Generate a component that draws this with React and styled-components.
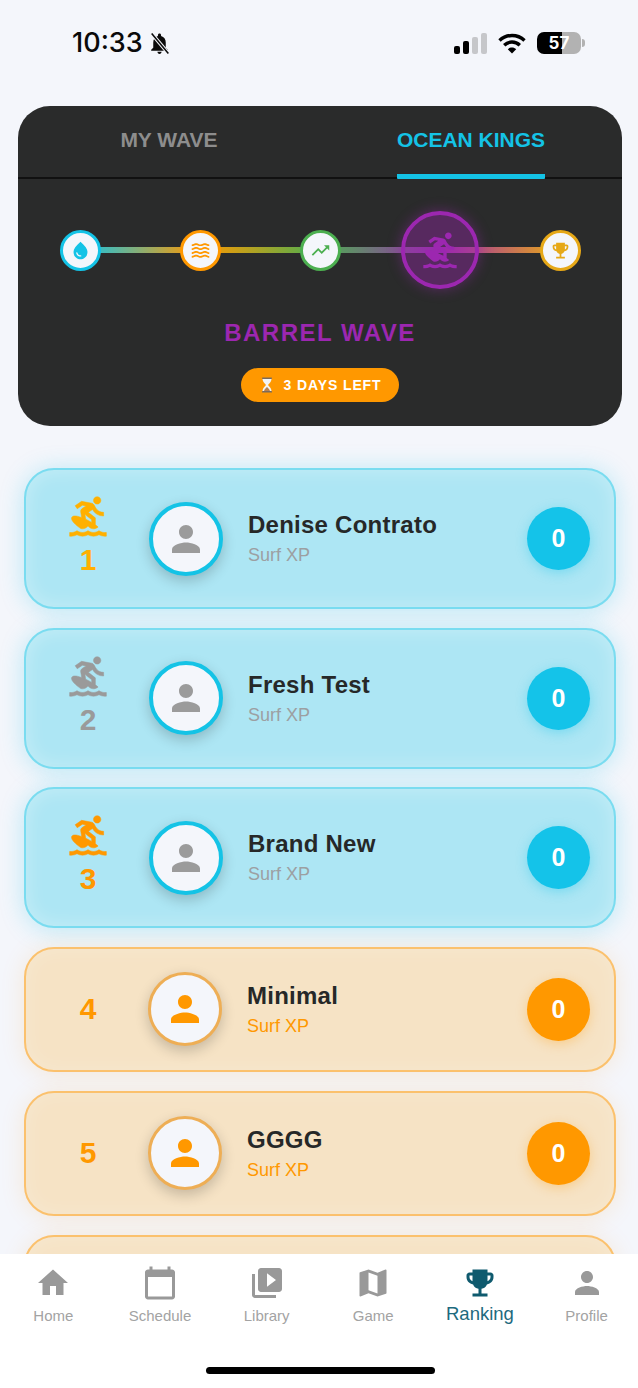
import React from "react";
import styled, { createGlobalStyle } from "styled-components";
import {
  MdWaterDrop,
  MdWaves,
  MdTrendingUp,
  MdSurfing,
  MdEmojiEvents,
  MdPerson,
  MdHome,
  MdCalendarToday,
  MdVideoLibrary,
  MdMap,
} from "react-icons/md";

const GlobalStyle = createGlobalStyle`
  html, body {
    margin: 0;
    padding: 0;
    background: #f4f6fb;
    font-family: "Liberation Sans", Arial, sans-serif;
  }
`;

const Screen = styled.div`
  width: 638px;
  height: 1388px;
  display: flex;
  flex-direction: column;
  overflow: hidden;
  background: #f4f6fb;
`;

const StatusBar = styled.div`
  height: 106px;
  flex-shrink: 0;
  display: flex;
  justify-content: space-between;
  align-items: flex-start;
  padding: 26px 54px 0 72px;
  box-sizing: border-box;
`;

const Time = styled.div`
  display: flex;
  align-items: center;
  gap: 4px;
  font-family: "Inter", sans-serif;
  font-size: 27px;
  font-weight: 500;
  line-height: 34px;
  color: #0a0a0a;
`;

const StatusIcons = styled.div`
  display: flex;
  align-items: center;
  gap: 11px;
  height: 34px;
`;

const Battery = styled.div`
  position: relative;
  width: 44px;
  height: 22px;
  border-radius: 7px;
  background: linear-gradient(90deg, #000 57%, #b2b2b2 57%);
  font-family: "Inter", sans-serif;
  font-size: 17px;
  font-weight: 700;
  line-height: 22px;
  text-align: center;
  color: #fff;
  margin-right: 3px;

  &::after {
    content: "";
    position: absolute;
    right: -4px;
    top: 7px;
    width: 3px;
    height: 8px;
    border-radius: 0 3px 3px 0;
    background: #b2b2b2;
  }
`;

const Hero = styled.section`
  flex-shrink: 0;
  margin: 0 16px 0 18px;
  height: 320px;
  border-radius: 32px;
  background: #2a2b2b;
  display: flex;
  flex-direction: column;
  align-items: center;
`;

const Tabs = styled.div`
  width: 100%;
  height: 73px;
  display: grid;
  grid-template-columns: 1fr 1fr;
  border-bottom: 2px solid #111;
  box-sizing: border-box;
`;

const Tab = styled.div`
  display: flex;
  justify-content: center;
  margin-bottom: -2px;
`;

const TabLabel = styled.div`
  height: 100%;
  box-sizing: border-box;
  padding-top: 21px;
  font-size: 21px;
  line-height: 25px;
  font-weight: 700;
  color: ${(p) => (p.$active ? "#14c3e6" : "#8d8d8d")};
  border-bottom: 5px solid ${(p) => (p.$active ? "#14c3e6" : "transparent")};
  border-radius: 0 0 1px 1px;
`;

const Stepper = styled.div`
  position: relative;
  width: 600px;
  height: 78px;
  margin-top: 32px;
  display: grid;
  grid-template-columns: repeat(5, 120px);
  place-items: center;

  &::before {
    content: "";
    position: absolute;
    left: 60px;
    right: 60px;
    top: 36px;
    height: 6px;
    background: linear-gradient(
      90deg,
      #14c3e6 0%,
      #ff9800 25%,
      #4caf50 50%,
      #9c27b0 75%,
      #e6a817 100%
    );
  }
`;

const Step = styled.div`
  position: relative;
  box-sizing: border-box;
  width: ${(p) => (p.$active ? 78 : 41)}px;
  height: ${(p) => (p.$active ? 78 : 41)}px;
  border-radius: 50%;
  border: ${(p) => (p.$active ? 4 : 3)}px solid ${(p) => p.$color};
  background: ${(p) => (p.$active ? "rgba(156, 39, 176, 0.4)" : "#f4f6fb")};
  box-shadow: ${(p) => (p.$active ? "0 0 14px rgba(156, 39, 176, 0.45)" : "none")};
  color: ${(p) => p.$color};
  display: flex;
  align-items: center;
  justify-content: center;
  font-size: ${(p) => (p.$active ? 40 : 21)}px;
`;

const WaveTitle = styled.div`
  margin-top: 29px;
  font-size: 24px;
  line-height: 30px;
  font-weight: 700;
  letter-spacing: 1.5px;
  color: #9c27b0;
`;

const DaysPill = styled.div`
  margin-top: 20px;
  width: 158px;
  height: 34px;
  box-sizing: border-box;
  padding-left: 3px;
  border-radius: 17px;
  background: #ff9800;
  display: flex;
  align-items: center;
  justify-content: center;
  gap: 10px;
  color: #fff;
  font-size: 14px;
  font-weight: 700;
  letter-spacing: 0.9px;
`;

const List = styled.div`
  flex: 1;
  min-height: 0;
  overflow: hidden;
  display: flex;
  flex-direction: column;
  gap: 18.5px;
  padding: 42px 22px 0 24px;
`;

const Card = styled.div`
  flex-shrink: 0;
  box-sizing: border-box;
  height: ${(p) => (p.$top ? 141 : 125.5)}px;
  display: flex;
  align-items: center;
  padding: 0 24px 0 24px;
  border-radius: 30px;
  border: 2px solid ${(p) => (p.$top ? "#7adcf0" : "#fbc16d")};
  background: ${(p) => (p.$top ? "#ade6f4" : "#f6e3c5")};
  box-shadow: ${(p) =>
    p.$top
      ? "0 2px 24px rgba(20, 195, 230, 0.26), inset 0 0 20px rgba(255, 255, 255, 0.32)"
      : "0 2px 24px rgba(255, 152, 0, 0.14), inset 0 0 20px rgba(255, 255, 255, 0.2)"};
`;

const RankCol = styled.div`
  width: 76px;
  flex-shrink: 0;
  display: flex;
  flex-direction: column;
  align-items: center;
  color: ${(p) => p.$color};
  margin-bottom: ${(p) => (p.$top ? 7 : 0)}px;
`;

const SurferIcon = styled(MdSurfing)`
  margin-bottom: 7px;

  path:not([fill="none"]) {
    stroke: currentColor;
    stroke-width: 0.3;
  }
`;

const RankNumber = styled.div`
  font-size: 30px;
  line-height: 32px;
  font-weight: 700;
  margin-top: ${(p) => (p.$top ? -1 : 0)}px;
`;

const Avatar = styled.div`
  box-sizing: border-box;
  flex-shrink: 0;
  width: 74px;
  height: 74px;
  margin-left: ${(p) => (p.$top ? 23 : 22)}px;
  border-radius: 50%;
  background: #f4f6fb;
  border: ${(p) => (p.$top ? "4px solid #14c3e6" : "3px solid #eeae55")};
  color: ${(p) => (p.$top ? "#9b9b9b" : "#ff9800")};
  box-shadow: 0 5px 14px rgba(0, 0, 0, 0.2);
  display: flex;
  align-items: center;
  justify-content: center;
`;

const Info = styled.div`
  flex: 1;
  margin-left: 25px;
`;

const Name = styled.div`
  font-size: 24px;
  line-height: 30px;
  font-weight: 700;
  letter-spacing: 0.25px;
  color: #262828;
`;

const Sub = styled.div`
  margin-top: 3px;
  font-size: 18px;
  line-height: 24px;
  color: ${(p) => (p.$top ? "#9c9fa2" : "#ff9800")};
`;

const Score = styled.div`
  flex-shrink: 0;
  width: 63px;
  height: 63px;
  border-radius: 50%;
  background: ${(p) => (p.$top ? "#14c3e9" : "#ff9800")};
  box-shadow: 0 3px 12px
    ${(p) => (p.$top ? "rgba(20, 195, 233, 0.35)" : "rgba(255, 152, 0, 0.3)")};
  color: #fff;
  display: flex;
  align-items: center;
  justify-content: center;
  font-size: 25px;
  font-weight: 700;
`;

const BottomNav = styled.nav`
  flex-shrink: 0;
  height: 134px;
  background: #fff;
  display: flex;
  flex-direction: column;
  position: relative;
`;

const NavItems = styled.div`
  display: grid;
  grid-template-columns: repeat(6, 106.67px);
  padding-top: 11px;
`;

const NavItem = styled.div`
  display: flex;
  flex-direction: column;
  align-items: center;
  color: ${(p) => (p.$active ? "#0f5a6e" : "#999")};
`;

const NavLabel = styled.div`
  margin-top: ${(p) => (p.$active ? 3 : 5)}px;
  font-size: ${(p) => (p.$active ? 18.5 : 15)}px;
  line-height: 20px;
  color: ${(p) => (p.$active ? "#1d6a7e" : "#a3a3a3")};
`;

const HomeBar = styled.div`
  width: 229px;
  height: 7px;
  border-radius: 4px;
  background: #000;
  margin: 41px 0 0 206px;
`;

const steps = [
  { Icon: MdWaterDrop, color: "#14c3e6" },
  { Icon: MdWaves, color: "#ff9800" },
  { Icon: MdTrendingUp, color: "#4caf50" },
  { Icon: MdSurfing, color: "#9c27b0", active: true },
  { Icon: MdEmojiEvents, color: "#e6a817" },
];

const players = [
  { rank: 1, name: "Denise Contrato", color: "#ffb000", top: true },
  { rank: 2, name: "Fresh Test", color: "#9a9a9a", top: true },
  { rank: 3, name: "Brand New", color: "#ff9800", top: true },
  { rank: 4, name: "Minimal", color: "#ff9800" },
  { rank: 5, name: "GGGG", color: "#ff9800" },
];

const navItems = [
  { label: "Home", Icon: MdHome },
  { label: "Schedule", Icon: MdCalendarToday },
  { label: "Library", Icon: MdVideoLibrary },
  { label: "Game", Icon: MdMap },
  { label: "Ranking", Icon: MdEmojiEvents, active: true },
  { label: "Profile", Icon: MdPerson },
];

function BellOffIcon() {
  return (
    <svg width="25" height="25" viewBox="0 0 24 24">
      <path
        fill="#0a0a0a"
        d="M12 22c1.1 0 2-.9 2-2h-4c0 1.1.9 2 2 2zm6-6v-5c0-3.07-1.63-5.64-4.5-6.32V4c0-.83-.67-1.5-1.5-1.5s-1.5.67-1.5 1.5v.68C7.64 5.36 6 7.92 6 11v5l-2 2v1h16v-1l-2-2z"
      />
      <path d="M4.5 2.5L20.5 21.5" stroke="#f4f6fb" strokeWidth="3.6" />
      <path d="M4.5 2.5L20.5 21.5" stroke="#0a0a0a" strokeWidth="1.5" />
    </svg>
  );
}

function SignalIcon() {
  return (
    <svg width="33" height="21" viewBox="0 0 33 21">
      <rect x="0" y="13" width="6" height="8" rx="2" fill="#000" />
      <rect x="9" y="8" width="6" height="13" rx="2" fill="#000" />
      <rect x="18" y="4" width="6" height="17" rx="2" fill="#c6c7ca" />
      <rect x="27" y="0" width="6" height="21" rx="2" fill="#c6c7ca" />
    </svg>
  );
}

function WifiIcon() {
  return (
    <svg width="28" height="21" viewBox="0 0 28 21" fill="none" stroke="#000" strokeWidth="3.4">
      <path d="M1.5 7.5C8.5 0.8 19.5 0.8 26.5 7.5" />
      <path d="M6.2 12.2C10.6 8 17.4 8 21.8 12.2" />
      <path d="M14 20.5L9.8 16.2C12.2 14 15.8 14 18.2 16.2Z" fill="#000" stroke="none" />
    </svg>
  );
}

function HourglassIcon() {
  return (
    <svg width="12" height="16" viewBox="0 0 12 16">
      <path d="M1.5 1.5H10.5C10.5 5 8 6.5 7 8C8 9.5 10.5 11 10.5 14.5H1.5C1.5 11 4 9.5 5 8C4 6.5 1.5 5 1.5 1.5Z" fill="#f2f4f6" />
      <path d="M6 10C7 11 8.6 12.2 9 14H3C3.4 12.2 5 11 6 10Z" fill="#b9824e" />
      <rect x="1" y="0.5" width="10" height="1.4" rx="0.6" fill="#7a6a5c" />
      <rect x="1" y="14.1" width="10" height="1.4" rx="0.6" fill="#7a6a5c" />
    </svg>
  );
}

export default function App() {
  return (
    <Screen>
      <GlobalStyle />
      <StatusBar>
        <Time>
          10:33
          <BellOffIcon />
        </Time>
        <StatusIcons>
          <SignalIcon />
          <WifiIcon />
          <Battery>57</Battery>
        </StatusIcons>
      </StatusBar>

      <Hero>
        <Tabs>
          <Tab>
            <TabLabel>MY WAVE</TabLabel>
          </Tab>
          <Tab>
            <TabLabel $active>OCEAN KINGS</TabLabel>
          </Tab>
        </Tabs>
        <Stepper>
          {steps.map(({ Icon, color, active }) => (
            <Step key={color} $color={color} $active={active}>
              <Icon />
            </Step>
          ))}
        </Stepper>
        <WaveTitle>BARREL WAVE</WaveTitle>
        <DaysPill>
          <HourglassIcon />
          3 DAYS LEFT
        </DaysPill>
      </Hero>

      <List>
        {players.map((p) => (
          <Card key={p.rank} $top={p.top}>
            <RankCol $color={p.color} $top={p.top}>
              {p.top && <SurferIcon size={44} />}
              <RankNumber $top={p.top}>{p.rank}</RankNumber>
            </RankCol>
            <Avatar $top={p.top}>
              <MdPerson size={42} />
            </Avatar>
            <Info>
              <Name>{p.name}</Name>
              <Sub $top={p.top}>Surf XP</Sub>
            </Info>
            <Score $top={p.top}>0</Score>
          </Card>
        ))}
        {/* next row is only peeking out above the nav */}
        <Card />
      </List>

      <BottomNav>
        <NavItems>
          {navItems.map(({ label, Icon, active }) => (
            <NavItem key={label} $active={active}>
              <Icon size={36} />
              <NavLabel $active={active}>{label}</NavLabel>
            </NavItem>
          ))}
        </NavItems>
        <HomeBar />
      </BottomNav>
    </Screen>
  );
}
